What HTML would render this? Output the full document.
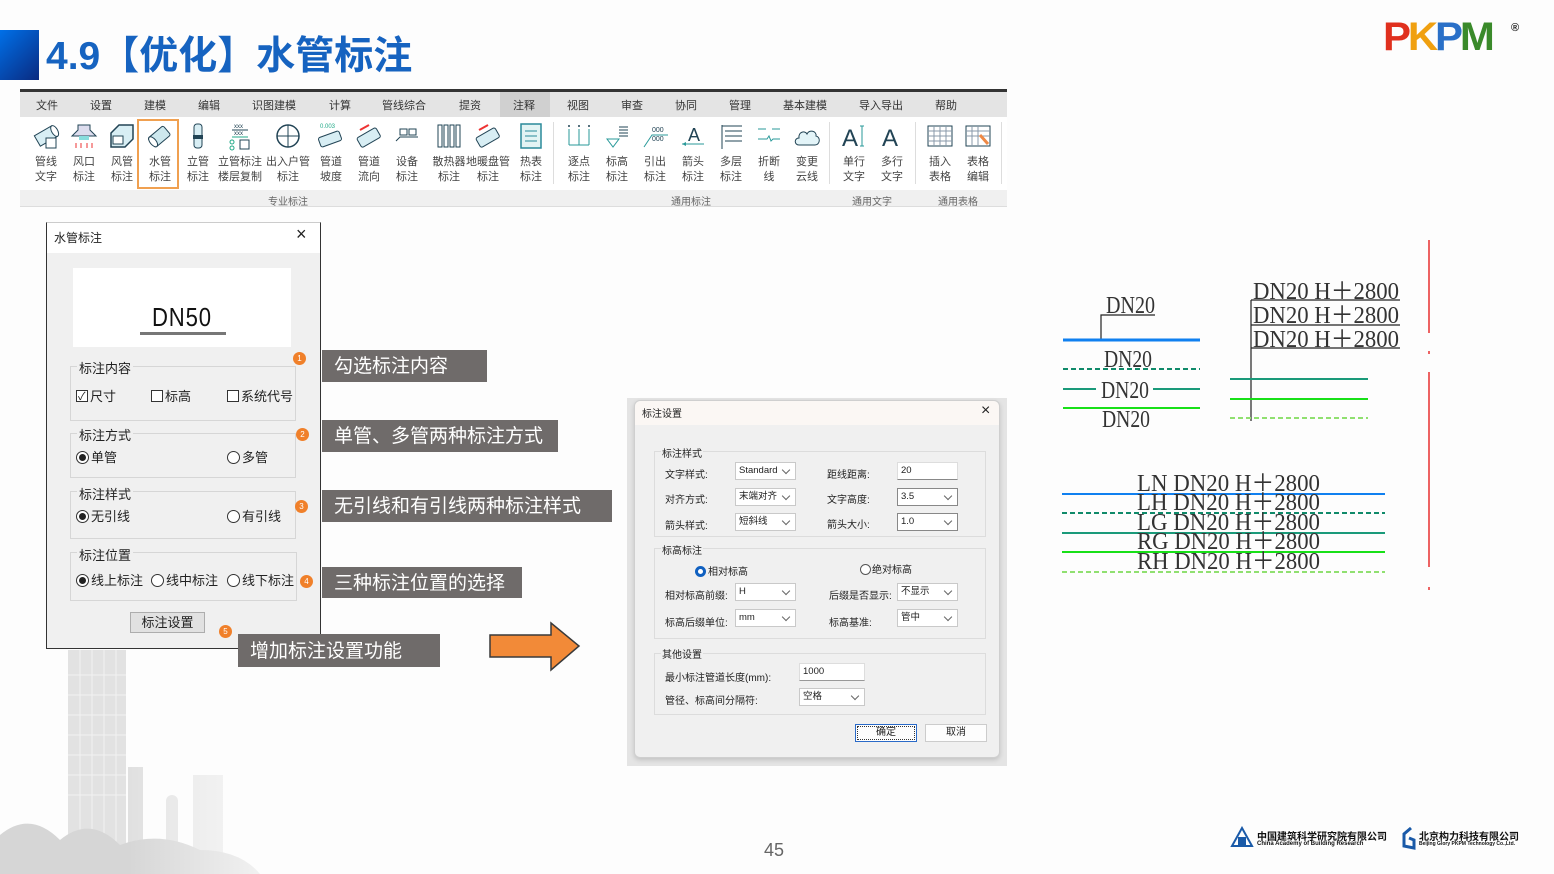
<!DOCTYPE html>
<html><head><meta charset="utf-8">
<style>
*{margin:0;padding:0;box-sizing:border-box}
body{width:1554px;height:874px;background:#fdfdfd;position:relative;overflow:hidden;font-family:"Liberation Sans","Noto Sans CJK SC",sans-serif;color:#222}
.a{position:absolute}
.t{position:absolute;white-space:nowrap}
.tab{position:absolute;top:97px;font-size:11px;color:#333;transform:translateX(-50%)}
.btn{position:absolute;top:121px;width:38px;margin-left:-19px;text-align:center;font-size:11px;line-height:15px;color:#444}
.btn svg{display:block;margin:0 auto 4px auto}
.gl{position:absolute;top:193px;font-size:10px;color:#666;transform:translateX(-50%)}
.lbl{position:absolute;background:#6f6b6a;color:#fff;font-size:19px;line-height:30px;padding-left:12px;padding-top:2px}
.oc{position:absolute;width:13px;height:13px;border-radius:50%;background:#f0802a;color:#fff;font-size:8px;text-align:center;line-height:13px}
.gb{position:absolute;border:1px solid #d6d6d6}
.gt{position:absolute;background:#f0f0f0;font-size:13px;padding:0 2px;color:#222}
.cb{display:inline-block;width:12px;height:12px;border:1px solid #333;background:#fff;vertical-align:-1px;margin-right:2px;position:relative}
.rb{display:inline-block;width:13px;height:13px;border:1px solid #333;border-radius:50%;background:#fff;vertical-align:-2px;margin-right:2px;position:relative}
.rb.on:after{content:"";position:absolute;left:2px;top:2px;width:7px;height:7px;border-radius:50%;background:#222}
.s{font-size:10px;color:#222}
.cmb{position:absolute;height:18px;border:1px solid #c9c9c9;background:#fff;font-size:9.5px;line-height:16px;padding-left:3px;color:#222}
.cmb.d:after{content:"";position:absolute;right:6px;top:4px;width:5px;height:5px;border-right:1px solid #666;border-bottom:1px solid #666;transform:rotate(45deg)}
.cmb.k{border-color:#888}
.g2{position:absolute;border:1px solid #dcdcdc}
.g2t{position:absolute;background:#f0f0f0;font-size:10px;padding:0 1px}
</style></head><body>

<!-- building background -->
<svg class="a" style="left:0;top:645px" width="320" height="229" viewBox="0 0 320 229">
<defs><linearGradient id="fg" x1="0" y1="0" x2="1" y2="0"><stop offset="0.4" stop-color="#fdfdfd" stop-opacity="0"/><stop offset="1" stop-color="#fdfdfd"/></linearGradient></defs>
<rect x="68" y="5" width="58" height="205" fill="#e2e2e2"/>
<g stroke="#f2f2f2" stroke-width="1">
<line x1="68" y1="30" x2="126" y2="30"/><line x1="68" y1="50" x2="126" y2="50"/><line x1="68" y1="70" x2="126" y2="70"/><line x1="68" y1="90" x2="126" y2="90"/><line x1="68" y1="110" x2="126" y2="110"/><line x1="68" y1="130" x2="126" y2="130"/><line x1="68" y1="150" x2="126" y2="150"/>
<line x1="80" y1="5" x2="80" y2="200"/><line x1="92" y1="5" x2="92" y2="200"/><line x1="104" y1="5" x2="104" y2="200"/><line x1="116" y1="5" x2="116" y2="200"/></g>
<rect x="128" y="122" width="15" height="100" fill="#e0e0e0"/>
<rect x="166" y="150" width="12" height="70" rx="6" fill="#e4e4e4"/>
<rect x="193" y="130" width="30" height="100" fill="#e6e6e6"/>
<path d="M0 229 L0 190 Q30 165 60 195 Q90 170 120 200 Q160 185 200 205 Q240 205 260 229 Z" fill="#d6d6d6"/>
<rect x="0" y="0" width="320" height="229" fill="url(#fg)"/>
</svg>

<!-- title -->
<div class="a" style="left:0;top:30px;width:39px;height:50px;background:linear-gradient(135deg,#0070e8,#0a2a80)"></div>
<div class="t" style="left:46px;top:25px;font-size:39px;font-weight:bold;color:#1663c0;font-family:'Liberation Sans','Noto Sans CJK SC',sans-serif">4.9【优化】水管标注</div>

<!-- PKPM logo -->
<div class="t" style="left:1383px;top:15px;font-size:40px;font-weight:900;letter-spacing:-3px;font-family:'Liberation Sans',sans-serif;transform:scaleX(1.05);transform-origin:left"><span style="color:#e0301e">P</span><span style="color:#f0a010">K</span><span style="color:#2a70c8">P</span><span style="color:#3a8a2a">M</span></div>
<div class="t" style="left:1511px;top:22px;font-size:11px;font-weight:bold">®</div>

<!-- toolbar -->
<div class="a" style="left:20px;top:89px;width:987px;height:3px;background:#333"></div>
<div class="a" style="left:20px;top:92px;width:987px;height:25px;background:#e4e4e4"></div>
<div class="a" style="left:500px;top:92px;width:50px;height:25px;background:#d0d0d0"></div>
<div class="a" style="left:20px;top:117px;width:987px;height:73px;background:#fff"></div>
<div class="a" style="left:20px;top:190px;width:987px;height:17px;background:#f0f0f0;border-bottom:1px solid #ddd"></div>
<div class="a" style="left:137px;top:119px;width:42px;height:70px;border:2px solid #f0a050"></div>
<div class="a" style="left:553px;top:122px;width:1px;height:62px;background:#ddd"></div>
<div class="a" style="left:829px;top:122px;width:1px;height:62px;background:#ddd"></div>
<div class="a" style="left:915px;top:122px;width:1px;height:62px;background:#ddd"></div>
<div class="a" style="left:1001px;top:122px;width:1px;height:62px;background:#ddd"></div>
<span class="tab" style="left:47px">文件</span><span class="tab" style="left:101px">设置</span><span class="tab" style="left:155px">建模</span><span class="tab" style="left:209px">编辑</span><span class="tab" style="left:274px">识图建模</span><span class="tab" style="left:340px">计算</span><span class="tab" style="left:404px">管线综合</span><span class="tab" style="left:470px">提资</span><span class="tab" style="left:524px">注释</span><span class="tab" style="left:578px">视图</span><span class="tab" style="left:632px">审查</span><span class="tab" style="left:686px">协同</span><span class="tab" style="left:740px">管理</span><span class="tab" style="left:805px">基本建模</span><span class="tab" style="left:881px">导入导出</span><span class="tab" style="left:946px">帮助</span>

<div class="btn" style="left:46px"><svg width="28" height="30"><g transform="rotate(-30 14 15)"><rect x="4" y="9" width="20" height="12" fill="#d8eef4" stroke="#245" /><ellipse cx="24" cy="15" rx="3" ry="6" fill="#fff" stroke="#245"/></g><rect x="14" y="17" width="10" height="10" fill="#fff" stroke="#245"/></svg>管线<br>文字</div>
<div class="btn" style="left:84px"><svg width="28" height="30"><path d="M8 4h12v5l6 6H2l6-6z" fill="#dde" stroke="#245"/><rect x="9" y="15" width="10" height="4" fill="#8dd" /><path d="M6 22v5M11 22v5M17 22v5M22 22v5" stroke="#e33"/></svg>风口<br>标注</div>
<div class="btn" style="left:122px"><svg width="28" height="30"><path d="M3 12l8-8h14v14l-8 8H3z" fill="#d8eef4" stroke="#245" stroke-width="1.5"/><rect x="5" y="15" width="10" height="8" fill="#fff" stroke="#245"/></svg>风管<br>标注</div>
<div class="btn" style="left:160px"><svg width="28" height="30"><g transform="rotate(-40 14 15)"><rect x="3" y="9" width="20" height="12" rx="2" fill="#cde8ee" stroke="#245"/><ellipse cx="5" cy="15" rx="3" ry="6" fill="#fff" stroke="#245"/></g></svg>水管<br>标注</div>
<div class="btn" style="left:198px"><svg width="28" height="30"><rect x="10" y="3" width="8" height="24" rx="3" fill="#d8eef4" stroke="#245"/><rect x="9" y="14" width="10" height="4" fill="#245"/></svg>立管<br>标注</div>
<div class="btn" style="left:240px;width:50px;margin-left:-25px"><svg width="28" height="30"><text x="8" y="7" font-size="6" fill="#245">xxx</text><line x1="6" y1="9" x2="22" y2="9" stroke="#245"/><text x="8" y="14" font-size="6" fill="#245">xxx</text><line x1="6" y1="16" x2="22" y2="16" stroke="#2a8"/><circle cx="6" cy="21" r="2" fill="none" stroke="#2a8"/><circle cx="6" cy="27" r="2" fill="none" stroke="#2a8"/><rect x="14" y="19" width="9" height="9" fill="#fff" stroke="#245"/></svg>立管标注<br>楼层复制</div>
<div class="btn" style="left:288px;width:50px;margin-left:-25px"><svg width="28" height="30"><circle cx="14" cy="15" r="11" fill="#fff" stroke="#245" stroke-width="1.5"/><line x1="3" y1="15" x2="25" y2="15" stroke="#245"/><line x1="14" y1="4" x2="14" y2="26" stroke="#245"/></svg>出入户管<br>标注</div>
<div class="btn" style="left:331px"><svg width="30" height="30"><text x="4" y="7" font-size="6" fill="#2a8">0.003</text><g transform="rotate(-20 14 18)"><rect x="3" y="13" width="22" height="10" rx="2" fill="#d8eef4" stroke="#245"/></g></svg>管道<br>坡度</div>
<div class="btn" style="left:369px"><svg width="28" height="30"><path d="M5 9l9-5" stroke="#e33" stroke-width="2"/><g transform="rotate(-30 14 17)"><rect x="3" y="11" width="22" height="11" rx="2" fill="#d8eef4" stroke="#245"/></g></svg>管道<br>流向</div>
<div class="btn" style="left:407px"><svg width="28" height="30"><rect x="7" y="8" width="7" height="6" fill="#fff" stroke="#245"/><rect x="16" y="8" width="7" height="6" fill="#fff" stroke="#245"/><path d="M3 20l4-4h18" stroke="#245" fill="none"/></svg>设备<br>标注</div>
<div class="btn" style="left:449px;width:44px;margin-left:-22px"><svg width="28" height="30"><g fill="#fff" stroke="#245"><rect x="3" y="4" width="4" height="22"/><rect x="9" y="4" width="4" height="22"/><rect x="15" y="4" width="4" height="22"/><rect x="21" y="4" width="4" height="22"/></g></svg>散热器<br>标注</div>
<div class="btn" style="left:488px;width:44px;margin-left:-22px"><svg width="28" height="30"><path d="M5 9l9-5" stroke="#e33" stroke-width="2"/><g transform="rotate(-30 14 17)"><rect x="3" y="11" width="22" height="11" rx="2" fill="#d8eef4" stroke="#245"/></g></svg>地暖盘管<br>标注</div>
<div class="btn" style="left:531px"><svg width="28" height="30"><rect x="4" y="3" width="20" height="24" fill="#e3f4f4" stroke="#2a8a9a" stroke-width="1.5"/><path d="M8 10h12M8 15h12M8 20h12" stroke="#2a8a9a"/></svg>热表<br>标注</div>
<div class="btn" style="left:579px"><svg width="28" height="30"><g stroke="#2a9a9a"><path d="M4 8v16M14 8v16M24 8v16M4 24h20"/></g><g fill="#245"><circle cx="4" cy="5" r="1"/><circle cx="14" cy="5" r="1"/><circle cx="24" cy="5" r="1"/></g></svg>逐点<br>标注</div>
<div class="btn" style="left:617px"><svg width="28" height="30"><path d="M16 6h9M16 9h9M16 12h9M16 15h9" stroke="#245"/><path d="M4 18h12l-6 8z" fill="none" stroke="#2a9a9a"/></svg>标高<br>标注</div>
<div class="btn" style="left:655px"><svg width="28" height="30"><text x="11" y="11" font-size="7" fill="#245">000</text><text x="11" y="20" font-size="7" fill="#245">000</text><path d="M3 26l8-12h16" stroke="#2a9a9a" fill="none"/></svg>引出<br>标注</div>
<div class="btn" style="left:693px"><svg width="28" height="30"><text x="9" y="20" font-size="18" fill="#245">A</text><path d="M3 23h22" stroke="#2a9a9a"/><path d="M3 23l4-2v4z" fill="#2a9a9a"/></svg>箭头<br>标注</div>
<div class="btn" style="left:731px"><svg width="28" height="30"><path d="M5 4v24M5 5h20M8 10h17M8 15h17M8 20h17" stroke="#245"/></svg>多层<br>标注</div>
<div class="btn" style="left:769px"><svg width="28" height="30"><path d="M3 8h8M17 8h8M3 18h9l2-3 2 5 2-2h7" stroke="#2a9a9a" fill="none"/></svg>折断<br>线</div>
<div class="btn" style="left:807px"><svg width="28" height="30"><path d="M6 24c-5 0-5-7 0-7c-1-6 6-8 8-4c2-5 10-3 9 2c5 1 4 9-1 9z" fill="#e3f4f8" stroke="#245"/></svg>变更<br>云线</div>
<div class="btn" style="left:854px"><svg width="28" height="30"><text x="2" y="25" font-size="24" fill="#245">A</text><path d="M22 5v20M20 5h4M20 25h4" stroke="#2a9a9a"/></svg>单行<br>文字</div>
<div class="btn" style="left:892px"><svg width="28" height="30"><text x="4" y="25" font-size="24" fill="#245">A</text></svg>多行<br>文字</div>
<div class="btn" style="left:940px"><svg width="28" height="30"><rect x="2" y="5" width="24" height="20" fill="#fff" stroke="#245"/><path d="M2 10h24M2 15h24M2 20h24M8 5v20M14 5v20M20 5v20" stroke="#89a"/></svg>插入<br>表格</div>
<div class="btn" style="left:978px"><svg width="28" height="30"><rect x="2" y="5" width="24" height="20" fill="#fff" stroke="#245"/><path d="M2 10h24M2 15h24M8 5v20M14 5v20" stroke="#89a"/><path d="M16 14l8 9" stroke="#e84" stroke-width="3"/></svg>表格<br>编辑</div>
<span class="gl" style="left:288px">专业标注</span><span class="gl" style="left:691px">通用标注</span><span class="gl" style="left:872px">通用文字</span><span class="gl" style="left:958px">通用表格</span>

<!-- left dialog -->
<div class="a" style="left:46px;top:222px;width:275px;height:427px;background:#f0f0f0;border:1px solid #333;border-top:1px solid #ccc"></div>
<div class="a" style="left:47px;top:223px;width:273px;height:30px;background:#fff"></div>
<div class="t" style="left:54px;top:229px;font-size:12px">水管标注</div>
<div class="t" style="left:296px;top:224px;font-size:18px;color:#222">×</div>
<div class="a" style="left:73px;top:268px;width:218px;height:79px;background:#fff"></div>
<div class="t" style="left:152px;top:302px;font-size:26px;color:#111;letter-spacing:1px;transform:scaleX(0.85);transform-origin:left">DN50</div>
<div class="a" style="left:140px;top:332px;width:86px;height:3px;background:#777"></div>

<div class="gb" style="left:70px;top:366px;width:226px;height:55px"></div><div class="gt" style="left:77px;top:358px">标注内容</div>
<div class="t" style="left:76px;top:386px;font-size:13px"><span class="cb"><span style="position:absolute;left:1px;top:-3px;font-size:11px">✓</span></span>尺寸</div>
<div class="t" style="left:151px;top:386px;font-size:13px"><span class="cb"></span>标高</div>
<div class="t" style="left:227px;top:386px;font-size:13px"><span class="cb"></span>系统代号</div>
<div class="gb" style="left:70px;top:433px;width:226px;height:45px"></div><div class="gt" style="left:77px;top:425px">标注方式</div>
<div class="t" style="left:76px;top:447px;font-size:13px"><span class="rb on"></span>单管</div>
<div class="t" style="left:227px;top:447px;font-size:13px"><span class="rb"></span>多管</div>
<div class="gb" style="left:70px;top:491px;width:226px;height:48px"></div><div class="gt" style="left:77px;top:484px">标注样式</div>
<div class="t" style="left:76px;top:506px;font-size:13px"><span class="rb on"></span>无引线</div>
<div class="t" style="left:227px;top:506px;font-size:13px"><span class="rb"></span>有引线</div>
<div class="gb" style="left:70px;top:552px;width:227px;height:49px"></div><div class="gt" style="left:77px;top:545px">标注位置</div>
<div class="t" style="left:76px;top:570px;font-size:13px"><span class="rb on"></span>线上标注</div>
<div class="t" style="left:151px;top:570px;font-size:13px"><span class="rb"></span>线中标注</div>
<div class="t" style="left:227px;top:570px;font-size:13px"><span class="rb"></span>线下标注</div>
<div class="a" style="left:130px;top:612px;width:75px;height:21px;background:#e1e1e1;border:1px solid #adadad;font-size:13px;text-align:center;line-height:19px">标注设置</div>

<div class="oc" style="left:293px;top:352px">1</div>
<div class="oc" style="left:296px;top:428px">2</div>
<div class="oc" style="left:295px;top:500px">3</div>
<div class="oc" style="left:300px;top:575px">4</div>
<div class="oc" style="left:219px;top:625px">5</div>

<div class="lbl" style="left:322px;top:350px;width:165px">勾选标注内容</div>
<div class="lbl" style="left:322px;top:420px;width:236px">单管、多管两种标注方式</div>
<div class="lbl" style="left:322px;top:490px;width:290px">无引线和有引线两种标注样式</div>
<div class="lbl" style="left:322px;top:567px;width:200px;height:31px">三种标注位置的选择</div>
<div class="lbl" style="left:238px;top:634px;width:202px;height:33px;line-height:32px">增加标注设置功能</div>

<!-- arrow -->
<svg class="a" style="left:488px;top:620px" width="96" height="52"><path d="M2 15h61V3l28 23-28 24V37H2z" fill="#f28a38" stroke="#3a3a3a" stroke-width="1.5"/></svg>

<!-- right dialog -->
<div class="a" style="left:627px;top:398px;width:380px;height:368px;background:#e4e4e4"></div>
<div class="a" style="left:634px;top:400px;width:366px;height:358px;background:#f0f0f0;border:1px solid #cfcfcf;border-radius:6px;box-shadow:0 2px 5px rgba(0,0,0,.15)"></div>
<div class="a" style="left:635px;top:401px;width:364px;height:24px;background:#fbf7f4;border-radius:6px 6px 0 0"></div>
<div class="t s" style="left:642px;top:405px">标注设置</div>
<div class="t" style="left:981px;top:402px;font-size:16px">×</div>

<div class="g2" style="left:654px;top:451px;width:332px;height:86px"></div><div class="g2t" style="left:661px;top:445px">标注样式</div>
<div class="t s" style="left:665px;top:466px">文字样式:</div><div class="cmb d" style="left:735px;top:462px;width:61px">Standard</div>
<div class="t s" style="left:827px;top:466px">距线距离:</div><div class="cmb" style="left:897px;top:462px;width:61px;border-color:#ddd;border-bottom-color:#888">20</div>
<div class="t s" style="left:665px;top:491px">对齐方式:</div><div class="cmb d" style="left:735px;top:488px;width:61px">末端对齐</div>
<div class="t s" style="left:827px;top:491px">文字高度:</div><div class="cmb d k" style="left:897px;top:488px;width:61px">3.5</div>
<div class="t s" style="left:665px;top:517px">箭头样式:</div><div class="cmb d" style="left:735px;top:513px;width:61px">短斜线</div>
<div class="t s" style="left:827px;top:516px">箭头大小:</div><div class="cmb d k" style="left:897px;top:513px;width:61px">1.0</div>

<div class="g2" style="left:654px;top:548px;width:332px;height:91px"></div><div class="g2t" style="left:661px;top:542px">标高标注</div>
<div class="t s" style="left:695px;top:563px"><span style="display:inline-block;width:11px;height:11px;border-radius:50%;border:3px solid #1060c0;background:#fff;vertical-align:-2px;margin-right:2px"></span>相对标高</div>
<div class="t s" style="left:860px;top:561px"><span style="display:inline-block;width:11px;height:11px;border-radius:50%;border:1px solid #555;background:#fff;vertical-align:-2px;margin-right:1px"></span>绝对标高</div>
<div class="t s" style="left:665px;top:587px">相对标高前缀:</div><div class="cmb d" style="left:735px;top:583px;width:61px">H</div>
<div class="t s" style="left:829px;top:587px">后缀是否显示:</div><div class="cmb d" style="left:897px;top:583px;width:61px">不显示</div>
<div class="t s" style="left:665px;top:614px">标高后缀单位:</div><div class="cmb d" style="left:735px;top:609px;width:61px">mm</div>
<div class="t s" style="left:829px;top:614px">标高基准:</div><div class="cmb d" style="left:897px;top:609px;width:61px">管中</div>

<div class="g2" style="left:654px;top:653px;width:332px;height:62px"></div><div class="g2t" style="left:661px;top:646px">其他设置</div>
<div class="t s" style="left:665px;top:669px">最小标注管道长度(mm):</div><div class="cmb" style="left:799px;top:663px;width:66px;border-color:#ddd;border-bottom-color:#999">1000</div>
<div class="t s" style="left:665px;top:692px">管径、标高间分隔符:</div><div class="cmb d" style="left:799px;top:688px;width:66px">空格</div>
<div class="a s" style="left:855px;top:724px;width:62px;height:18px;border:1px solid #2a6ac8;background:#fdfdfd;text-align:center;line-height:16px;outline:1px dotted #333;outline-offset:-3px">确定</div>
<div class="a s" style="left:925px;top:724px;width:62px;height:18px;border:1px solid #ccc;background:#fdfdfd;text-align:center;line-height:16px">取消</div>

<!-- drawing -->
<svg class="a" style="left:1050px;top:240px" width="400" height="360" viewBox="1050 240 400 360" font-family="Liberation Serif,serif" font-size="24" fill="#333">
<text x="1106" y="313" textLength="49" lengthAdjust="spacingAndGlyphs">DN20</text>
<path d="M1101 340V315H1155" stroke="#222" fill="none" stroke-width="1.2"/>
<line x1="1063" y1="340" x2="1200" y2="340" stroke="#1080f0" stroke-width="3"/>
<text x="1104" y="367" textLength="48" lengthAdjust="spacingAndGlyphs">DN20</text>
<line x1="1063" y1="369" x2="1200" y2="369" stroke="#108a6a" stroke-width="2" stroke-dasharray="5 3"/>
<line x1="1063" y1="389" x2="1096" y2="389" stroke="#1a9a7a" stroke-width="2"/><line x1="1153" y1="389" x2="1200" y2="389" stroke="#1a9a7a" stroke-width="2"/>
<text x="1101" y="398" textLength="48" lengthAdjust="spacingAndGlyphs">DN20</text>
<line x1="1063" y1="408" x2="1200" y2="408" stroke="#18e018" stroke-width="2"/>
<text x="1102" y="427" textLength="48" lengthAdjust="spacingAndGlyphs">DN20</text>

<text x="1253" y="299" textLength="146" lengthAdjust="spacingAndGlyphs">DN20  H＋2800</text>
<text x="1253" y="323" textLength="146" lengthAdjust="spacingAndGlyphs">DN20  H＋2800</text>
<text x="1253" y="347" textLength="146" lengthAdjust="spacingAndGlyphs">DN20  H＋2800</text>
<path d="M1251 300H1400M1251 325H1400M1251 348H1400M1251 300V421" stroke="#222" stroke-width="1.2" fill="none"/>
<line x1="1230" y1="379" x2="1368" y2="379" stroke="#1a9a7a" stroke-width="2"/>
<line x1="1230" y1="399" x2="1368" y2="399" stroke="#18e018" stroke-width="2"/>
<line x1="1230" y1="418" x2="1368" y2="418" stroke="#90e070" stroke-width="2" stroke-dasharray="5 3"/>

<path d="M1429 240V333M1429 351V354M1429 372V567M1429 587V590" stroke="#e83030" stroke-width="1.5"/>

<line x1="1062" y1="494" x2="1385" y2="494" stroke="#1080f0" stroke-width="2"/>
<line x1="1062" y1="513" x2="1385" y2="513" stroke="#108a6a" stroke-width="2" stroke-dasharray="5 3"/>
<line x1="1062" y1="533" x2="1385" y2="533" stroke="#1a9a7a" stroke-width="2"/>
<line x1="1062" y1="552" x2="1385" y2="552" stroke="#18e018" stroke-width="2"/>
<line x1="1062" y1="572" x2="1385" y2="572" stroke="#90e070" stroke-width="2" stroke-dasharray="5 3"/>
<text x="1137" y="491" textLength="183" lengthAdjust="spacingAndGlyphs">LN  DN20  H＋2800</text>
<text x="1137" y="510" textLength="183" lengthAdjust="spacingAndGlyphs">LH  DN20  H＋2800</text>
<text x="1137" y="530" textLength="183" lengthAdjust="spacingAndGlyphs">LG  DN20  H＋2800</text>
<text x="1137" y="549" textLength="183" lengthAdjust="spacingAndGlyphs">RG  DN20  H＋2800</text>
<text x="1137" y="569" textLength="183" lengthAdjust="spacingAndGlyphs">RH  DN20  H＋2800</text>
</svg>

<!-- footer -->
<div class="t" style="left:764px;top:840px;font-size:18px;color:#666">45</div>
<svg class="a" style="left:1230px;top:826px" width="24" height="24"><path d="M12 2L22 20H2z" fill="none" stroke="#1a5aa8" stroke-width="2"/><rect x="8" y="11" width="8" height="8" fill="#1a5aa8"/></svg>
<div class="t" style="left:1257px;top:828px;font-size:10px;font-weight:bold;color:#111">中国建筑科学研究院有限公司</div>
<div class="t" style="left:1257px;top:841px;font-size:6px;font-weight:bold;color:#111">China Academy of Building Research</div>
<svg class="a" style="left:1401px;top:826px" width="16" height="24"><path d="M10 2L3 8v12l10 2V14L8 12" fill="none" stroke="#1a5aa8" stroke-width="3"/></svg>
<div class="t" style="left:1419px;top:828px;font-size:10px;font-weight:bold;color:#111">北京构力科技有限公司</div>
<div class="t" style="left:1419px;top:841px;font-size:5px;font-weight:bold;color:#111">Beijing Glory PKPM Technology Co.,Ltd.</div>
</body></html>
